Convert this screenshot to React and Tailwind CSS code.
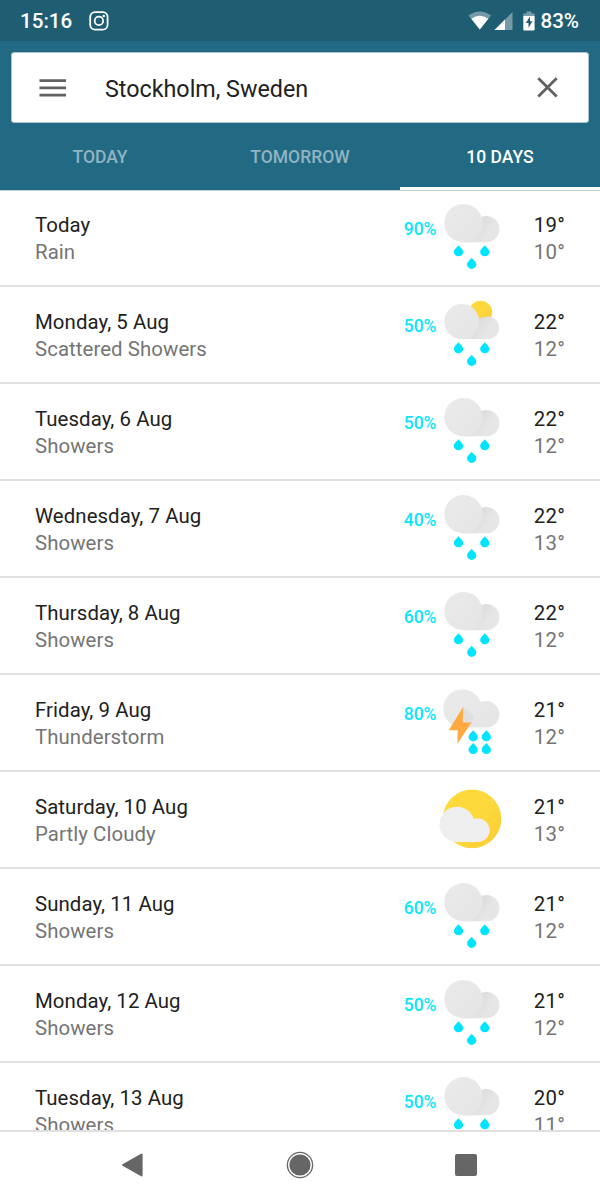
import { useState } from 'react'

const days = [
  { date: 'Today', summary: 'Rain', chance: 90, icon: 'rain', high: 19, low: 10 },
  { date: 'Monday, 5 Aug', summary: 'Scattered Showers', chance: 50, icon: 'scattered', high: 22, low: 12 },
  { date: 'Tuesday, 6 Aug', summary: 'Showers', chance: 50, icon: 'rain', high: 22, low: 12 },
  { date: 'Wednesday, 7 Aug', summary: 'Showers', chance: 40, icon: 'rain', high: 22, low: 13 },
  { date: 'Thursday, 8 Aug', summary: 'Showers', chance: 60, icon: 'rain', high: 22, low: 12 },
  { date: 'Friday, 9 Aug', summary: 'Thunderstorm', chance: 80, icon: 'storm', high: 21, low: 12 },
  { date: 'Saturday, 10 Aug', summary: 'Partly Cloudy', chance: null, icon: 'partly', high: 21, low: 13 },
  { date: 'Sunday, 11 Aug', summary: 'Showers', chance: 60, icon: 'rain', high: 21, low: 12 },
  { date: 'Monday, 12 Aug', summary: 'Showers', chance: 50, icon: 'rain', high: 21, low: 12 },
  { date: 'Tuesday, 13 Aug', summary: 'Showers', chance: 50, icon: 'rain', high: 20, low: 11 },
]

const tabs = ['TODAY', 'TOMORROW', '10 DAYS']

function Drop({ x, y }) {
  return (
    <path
      transform={`translate(${x} ${y})`}
      d="M0 -5.6C1.4 -3.7 4.6 -1.5 4.6 1.1A4.6 4.4 0 0 1 -4.6 1.1C-4.6 -1.5 -1.4 -3.7 0 -5.6Z"
      fill="#00e5ff"
    />
  )
}

function WeatherIcon({ type }) {
  return (
    <svg width="66" height="95" viewBox="0 0 66 95" className="shrink-0">
      <defs>
        <linearGradient id="cloud" x1="0" y1="0" x2="1" y2="1">
          <stop offset="0" stopColor="#eaeaea" />
          <stop offset="1" stopColor="#e5e5e5" />
        </linearGradient>
        <linearGradient id="sun" x1="0" y1="0" x2="1" y2="1">
          <stop offset="0.5" stopColor="#fdd93c" />
          <stop offset="1" stopColor="#fccb35" />
        </linearGradient>
        <linearGradient id="seam" gradientUnits="userSpaceOnUse" x1="43" y1="33" x2="52" y2="39">
          <stop offset="0" stopColor="#dddddd" />
          <stop offset="1" stopColor="#e6e6e6" />
        </linearGradient>
      </defs>
      {type === 'rain' && (
        <>
          <path d="M25.4 52.3V33L42 27.5Q44.5 26 48.3 26A13.1 13.1 0 0 1 48.3 52.3Z" fill="url(#seam)" />
          <path d="M25.4 14A19.2 19.2 0 0 1 40.8 44.6Q38 49.5 33 52.3H25.4A19.15 19.15 0 0 1 25.4 14Z" fill="url(#cloud)" />
        </>
      )}
      {type === 'scattered' && (
        <>
          <circle cx="42.6" cy="25.2" r="11.5" fill="url(#sun)" />
          <path d="M23.7 52V34L40 32.2Q44.5 29.4 49.9 29.4A11.3 11.3 0 0 1 49.9 52Z" fill="url(#seam)" />
          <path d="M23.7 17A17.5 17.5 0 0 1 38.2 44.3Q35.5 49.5 31.5 52H23.7A17.5 17.5 0 0 1 23.7 17Z" fill="url(#cloud)" />
        </>
      )}
      {(type === 'rain' || type === 'scattered') && (
        <>
          <Drop x={20.5} y={60.8} />
          <Drop x={46.8} y={60.8} />
          <Drop x={33.7} y={73.4} />
        </>
      )}
      {type === 'storm' && (
        <>
          <path d="M25.4 52.6A19.1 19.1 0 1 1 42.3 26.9Q44.5 26 48.1 26A13.3 13.3 0 0 1 48.1 52.6Z" fill="url(#cloud)" />
          <path d="M25.3 31.7L36 41L33 52.6H25Z" fill="#d5d5d5" opacity="0.4" />
          <path d="M25.3 31.7L10.7 55.3H19.7L19.3 69L33.3 47.6H24.7Z" fill="#ffa940" />
          <Drop x={35.2} y={60.8} />
          <Drop x={48.3} y={60.8} />
          <Drop x={35.2} y={73.6} />
          <Drop x={48.3} y={73.6} />
        </>
      )}
      {type === 'partly' && (
        <>
          <circle cx="34" cy="46.9" r="29.3" fill="url(#sun)" />
          <path d="M19.8 70A17.6 17.6 0 1 1 35.7 46.8Q37.5 46.5 39.9 46.6A11.7 11.7 0 0 1 39.9 70Z" fill="#efefef" />
        </>
      )}
    </svg>
  )
}

function StatusBar() {
  return (
    <div className="h-[41px] shrink-0 bg-[#1f5d73] flex items-center justify-between pl-5 pr-[21px] text-white">
      <div className="flex items-center gap-[17px]">
        <span className="text-[20.6px] leading-6 font-medium">15:16</span>
        <svg width="20" height="20" viewBox="0 0 20 20" fill="none" stroke="currentColor" strokeWidth="1.8">
          <rect x="1.2" y="1.2" width="17.4" height="17.4" rx="4.8" />
          <circle cx="9.9" cy="9.9" r="4.2" />
          <circle cx="14.8" cy="5" r="1.2" fill="currentColor" stroke="none" />
        </svg>
      </div>
      <div className="flex items-center">
        <svg width="72" height="20" viewBox="0 0 72 20" fill="currentColor" className="ml-px">
          <path d="M0.5 4.5Q11.8 -3.3 23.1 4.5L11.8 18.6Z" opacity="0.38" />
          <path d="M3.3 7.8Q11.8 1.8 20.3 7.8L11.8 18.6Z" />
          <path d="M44.5 1V19H26.5Z" opacity="0.38" />
          <path d="M37 8.5V19H26.5Z" />
          <path d="M58.5 0.5H63.5V2.5H58.5Z" opacity="0.4" />
          <path d="M55.3 2.5H66.6V5H55.3Z" opacity="0.4" />
          <path fillRule="evenodd" d="M55.3 5H66.6V18.6Q66.6 19.6 65.6 19.6H56.3Q55.3 19.6 55.3 18.6ZM62 5.5L57.8 12H60.5V16.8L64.5 10.3H62Z" />
        </svg>
        <span className="text-[20.6px] leading-6 font-medium">83%</span>
      </div>
    </div>
  )
}

export default function App() {
  const [active, setActive] = useState('10 DAYS')

  return (
    <div className="w-full h-[1200px] flex flex-col overflow-hidden bg-white font-['Roboto',sans-serif]">
      <StatusBar />

      {/* Search and tabs */}
      <header className="h-[150px] shrink-0 bg-[#226983] flex flex-col border-b border-[#c2ced6]">
        <div className="mx-[11px] mt-[11px] h-[71px] shrink-0 bg-white rounded-[3px] border border-[#a9c3ce] flex items-center pl-[23px] pr-[27px]">
          <button aria-label="Menu" className="text-[#616161]">
            <svg width="34" height="24" viewBox="0 0 34 24" fill="none" stroke="currentColor" strokeWidth="2.8">
              <path d="M4.5 4.7H31M4.5 11.9H31M4.5 19.1H31" />
            </svg>
          </button>
          <span className="flex-1 pl-9 pt-0.5 text-[23.3px] leading-8 text-[#212121]">Stockholm, Sweden</span>
          <button aria-label="Clear" className="text-[#616161]">
            <svg width="26" height="26" viewBox="0 0 26 26" fill="none" stroke="currentColor" strokeWidth="2.8">
              <path d="M3.3 3.2L21.7 21.6M21.7 3.2L3.3 21.6" />
            </svg>
          </button>
        </div>
        <nav className="flex-1 grid grid-cols-3">
          {tabs.map(tab => (
            <button
              key={tab}
              onClick={() => setActive(tab)}
              className={`pt-1 text-[17.5px] leading-6 font-medium border-b-[3px] ${
                active === tab ? 'text-white border-white' : 'text-[#90b4c2] border-transparent'
              }`}
            >
              {tab}
            </button>
          ))}
        </nav>
      </header>

      {/* Forecast list, the last row runs under the navigation bar */}
      <main className="flex-1 min-h-0 overflow-hidden">
        {days.map((day, i) => (
          <div
            key={day.date}
            className={`flex items-start border-b-2 border-[#e0e0e0] pl-[35px] pr-[35px] ${i === 0 ? 'h-24 [&>svg]:-mt-px [&>div]:-mt-px [&>span]:-mt-px' : 'h-[97px]'}`}
          >
            <div className="flex-1 pt-[22px] text-[20.4px] leading-[27px] tracking-[0.07px]">
              <p className="text-[#212121]">{day.date}</p>
              <p className="text-[#757575]">{day.summary}</p>
            </div>
            {day.chance !== null && (
              <span className="pt-[27px] pr-[1.5px] text-[17.5px] leading-6 font-medium text-[#0de5fa]">{day.chance}%</span>
            )}
            <WeatherIcon type={day.icon} />
            <div className="w-[61px] pt-[22px] text-right text-[20.4px] leading-[27px] tracking-[0.2px]">
              <p className="text-[#212121]">{day.high}°</p>
              <p className="text-[#757575]">{day.low}°</p>
            </div>
          </div>
        ))}
      </main>

      {/* System navigation */}
      <footer className="h-[70px] shrink-0 border-t-2 border-[#e0e0e0] bg-white flex items-center justify-between pl-[121px] pr-[123px] pb-[3px] text-[#666666]">
        <svg width="24" height="26" viewBox="0 0 24 26" fill="currentColor" stroke="currentColor" strokeWidth="2" strokeLinejoin="round">
          <path d="M2 13L20.6 2.5V23.5Z" />
        </svg>
        <svg width="28" height="28" viewBox="0 0 28 28" fill="none" stroke="currentColor" className="mr-px">
          <circle cx="14" cy="14" r="12.6" strokeWidth="1.3" />
          <circle cx="14" cy="14" r="10.6" fill="currentColor" stroke="none" />
        </svg>
        <div className="size-[22px] rounded-[2px] bg-[#666666]" />
      </footer>
    </div>
  )
}
